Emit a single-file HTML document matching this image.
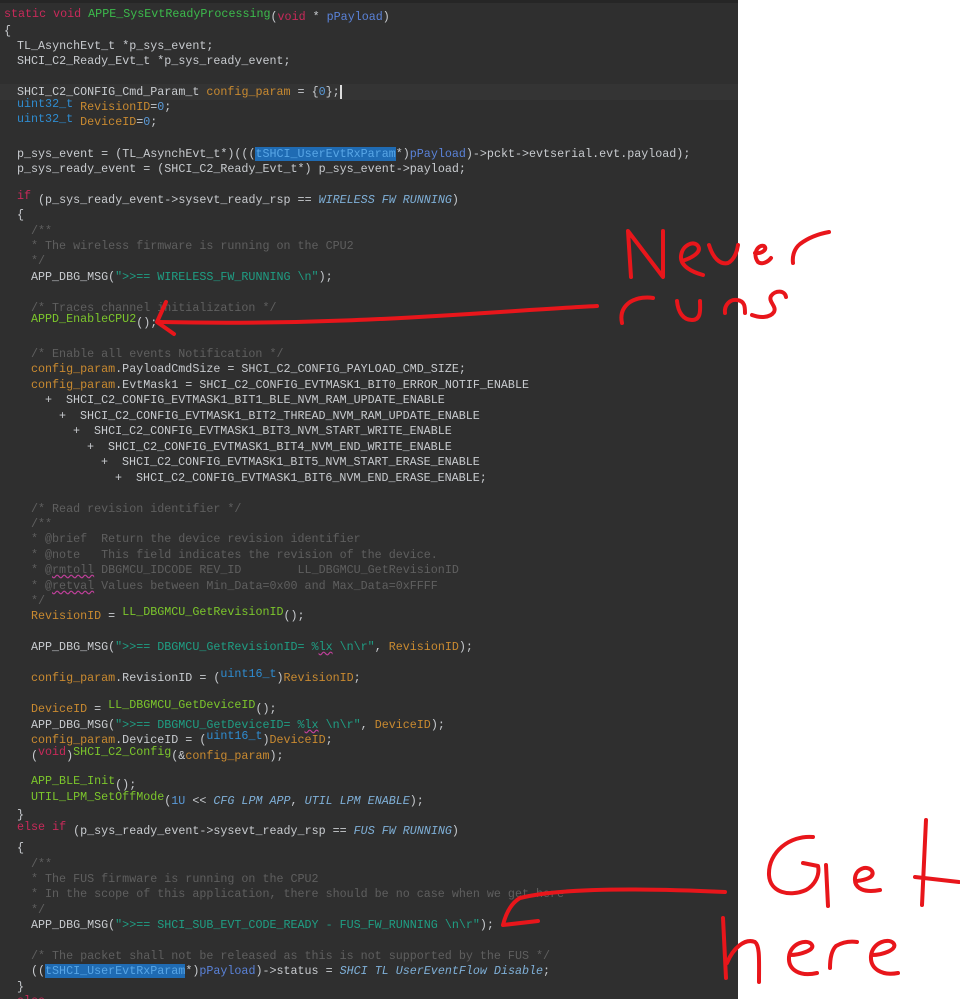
<!DOCTYPE html>
<html><head><meta charset="utf-8">
<style>
html,body{margin:0;padding:0;width:960px;height:999px;overflow:hidden;background:#fff;}
#code{position:absolute;left:0;top:0;width:738px;height:999px;background:#2f2f2f;overflow:hidden;}
.l{position:absolute;white-space:pre;font-family:"Liberation Mono",monospace;font-size:11.7px;line-height:15px;height:15px;color:#c8cbcf;}
.k{color:#c82a5a}
.f{color:#7cc62c}
.fn{color:#3cbb4c}
.p{color:#5a82d8}
.o{color:#c98a30}
.t{color:#2f8cd0}
.c{color:#5f5f5f}
.s{color:#1f9e84}
.i{color:#7fb0d8;font-style:italic}
.n{color:#5a9ad8}
.h{background:#1f6bb3;color:#58a6e6}
.up{position:relative;top:-4px}
.dn{position:relative;top:3px}
.sq{text-decoration:underline wavy #c0409a}
</style></head><body>
<div id="code">
<div style="position:absolute;left:0;top:0;width:738px;height:3px;background:#262626"></div>
<div style="position:absolute;left:0;top:84px;width:738px;height:16px;background:#343434"></div>
<div class="l" style="left:4px;top:7px"><span class="k">static void</span> <span class="fn">APPE_SysEvtReadyProcessing</span><span class="dn">(<span class="k">void</span> * <span class="p">pPayload</span>)</span></div>
<div class="l" style="left:4px;top:24px">{</div>
<div class="l" style="left:17px;top:39px">TL_AsynchEvt_t *p_sys_event;</div>
<div class="l" style="left:17px;top:54px">SHCI_C2_Ready_Evt_t *p_sys_ready_event;</div>
<div class="l" style="left:17px;top:85px">SHCI_C2_CONFIG_Cmd_Param_t <span class="o">config_param</span> = {<span class="n">0</span>};<span style="border-left:2px solid #ddd"></span></div>
<div class="l" style="left:17px;top:97px"><span class="t">uint32_t</span> <span class="o dn">RevisionID</span><span class="dn">=<span class="n">0</span>;</span></div>
<div class="l" style="left:17px;top:112px"><span class="t">uint32_t</span> <span class="o dn">DeviceID</span><span class="dn">=<span class="n">0</span>;</span></div>
<div class="l" style="left:17px;top:147px">p_sys_event = (TL_AsynchEvt_t*)(((<span class="h">tSHCI_UserEvtRxParam</span>*)<span class="p">pPayload</span>)-&gt;pckt-&gt;evtserial.evt.payload);</div>
<div class="l" style="left:17px;top:162px">p_sys_ready_event = (SHCI_C2_Ready_Evt_t*) p_sys_event-&gt;payload;</div>
<div class="l" style="left:17px;top:193px"><span class="k up">if</span> (p_sys_ready_event-&gt;sysevt_ready_rsp == <span class="i">WIRELESS FW RUNNING</span>)</div>
<div class="l" style="left:17px;top:208px">{</div>
<div class="l c" style="left:31px;top:224px">/**</div>
<div class="l c" style="left:31px;top:239px">* The wireless firmware is running on the CPU2</div>
<div class="l c" style="left:31px;top:254px">*/</div>
<div class="l" style="left:31px;top:270px">APP_DBG_MSG(<span class="s">"&gt;&gt;== WIRELESS_FW_RUNNING \n"</span>);</div>
<div class="l c" style="left:31px;top:301px">/* Traces channel initialization */</div>
<div class="l" style="left:31px;top:316px"><span class="f up">APPD_EnableCPU2</span>();</div>
<div class="l c" style="left:31px;top:347px">/* Enable all events Notification */</div>
<div class="l" style="left:31px;top:362px"><span class="o">config_param</span>.PayloadCmdSize = SHCI_C2_CONFIG_PAYLOAD_CMD_SIZE;</div>
<div class="l" style="left:31px;top:378px"><span class="o">config_param</span>.EvtMask1 = SHCI_C2_CONFIG_EVTMASK1_BIT0_ERROR_NOTIF_ENABLE</div>
<div class="l" style="left:45px;top:393px">+  SHCI_C2_CONFIG_EVTMASK1_BIT1_BLE_NVM_RAM_UPDATE_ENABLE</div>
<div class="l" style="left:59px;top:409px">+  SHCI_C2_CONFIG_EVTMASK1_BIT2_THREAD_NVM_RAM_UPDATE_ENABLE</div>
<div class="l" style="left:73px;top:424px">+  SHCI_C2_CONFIG_EVTMASK1_BIT3_NVM_START_WRITE_ENABLE</div>
<div class="l" style="left:87px;top:440px">+  SHCI_C2_CONFIG_EVTMASK1_BIT4_NVM_END_WRITE_ENABLE</div>
<div class="l" style="left:101px;top:455px">+  SHCI_C2_CONFIG_EVTMASK1_BIT5_NVM_START_ERASE_ENABLE</div>
<div class="l" style="left:115px;top:471px">+  SHCI_C2_CONFIG_EVTMASK1_BIT6_NVM_END_ERASE_ENABLE;</div>
<div class="l c" style="left:31px;top:502px">/* Read revision identifier */</div>
<div class="l c" style="left:31px;top:517px">/**</div>
<div class="l c" style="left:31px;top:532px">* @brief  Return the device revision identifier</div>
<div class="l c" style="left:31px;top:548px">* @note   This field indicates the revision of the device.</div>
<div class="l c" style="left:31px;top:563px">* @<span class="sq">rmtoll</span> DBGMCU_IDCODE REV_ID        LL_DBGMCU_GetRevisionID</div>
<div class="l c" style="left:31px;top:579px">* @<span class="sq">retval</span> Values between Min_Data=0x00 and Max_Data=0xFFFF</div>
<div class="l c" style="left:31px;top:594px">*/</div>
<div class="l" style="left:31px;top:609px"><span class="o">RevisionID</span> = <span class="f up">LL_DBGMCU_GetRevisionID</span>();</div>
<div class="l" style="left:31px;top:640px">APP_DBG_MSG(<span class="s">"&gt;&gt;== DBGMCU_GetRevisionID= %<span class="sq">lx</span> \n\r"</span>, <span class="o">RevisionID</span>);</div>
<div class="l" style="left:31px;top:671px"><span class="o">config_param</span>.RevisionID = (<span class="t up">uint16_t</span>)<span class="o">RevisionID</span>;</div>
<div class="l" style="left:31px;top:702px"><span class="o">DeviceID</span> = <span class="f up">LL_DBGMCU_GetDeviceID</span>();</div>
<div class="l" style="left:31px;top:718px">APP_DBG_MSG(<span class="s">"&gt;&gt;== DBGMCU_GetDeviceID= %<span class="sq">lx</span> \n\r"</span>, <span class="o">DeviceID</span>);</div>
<div class="l" style="left:31px;top:733px"><span class="o">config_param</span>.DeviceID = (<span class="t up">uint16_t</span>)<span class="o">DeviceID</span>;</div>
<div class="l" style="left:31px;top:749px">(<span class="k up">void</span>)<span class="f up">SHCI_C2_Config</span>(&amp;<span class="o">config_param</span>);</div>
<div class="l" style="left:31px;top:778px"><span class="f up">APP_BLE_Init</span>();</div>
<div class="l" style="left:31px;top:794px"><span class="f up">UTIL_LPM_SetOffMode</span>(<span class="n">1U</span> &lt;&lt; <span class="i">CFG LPM APP</span>, <span class="i">UTIL LPM ENABLE</span>);</div>
<div class="l" style="left:17px;top:808px">}</div>
<div class="l" style="left:17px;top:824px"><span class="k up">else if</span> (p_sys_ready_event-&gt;sysevt_ready_rsp == <span class="i">FUS FW RUNNING</span>)</div>
<div class="l" style="left:17px;top:841px">{</div>
<div class="l c" style="left:31px;top:857px">/**</div>
<div class="l c" style="left:31px;top:872px">* The FUS firmware is running on the CPU2</div>
<div class="l c" style="left:31px;top:887px">* In the scope of this application, there should be no case when we get here</div>
<div class="l c" style="left:31px;top:903px">*/</div>
<div class="l" style="left:31px;top:918px">APP_DBG_MSG(<span class="s">"&gt;&gt;== SHCI_SUB_EVT_CODE_READY - FUS_FW_RUNNING \n\r"</span>);</div>
<div class="l c" style="left:31px;top:949px">/* The packet shall not be released as this is not supported by the FUS */</div>
<div class="l" style="left:31px;top:964px">((<span class="h">tSHCI_UserEvtRxParam</span>*)<span class="p">pPayload</span>)-&gt;status = <span class="i">SHCI TL UserEventFlow Disable</span>;</div>
<div class="l" style="left:17px;top:980px">}</div>
<div class="l" style="left:17px;top:994px"><span class="k">else</span></div>
</div>
<svg width="960" height="999" style="position:absolute;left:0;top:0" fill="none" stroke="#e8161b" stroke-width="4" stroke-linecap="round" stroke-linejoin="round">
<path d="M631,277 L628,231 L663,277 L663,231"/>
<path d="M682,261 C692,258 702,252 698,246 C694,240 682,245 681,256 C680,266 692,272 703,275"/>
<path d="M709,245 C713,258 720,265 728,263 C734,260 737,252 738,245"/>
<path d="M755,253 C762,254 768,249 764,246 C758,244 752,254 758,262 C762,265 768,262 771,258"/>
<path d="M793,263 C792,255 795,248 800,244 C808,238 818,234 829,232"/>
<path d="M622,323 C620,314 623,307 630,302 C638,297 648,297 653,298"/>
<path d="M677,301 C678,312 683,320 692,320 C702,320 700,308 700,301"/>
<path d="M725,313 C724,305 730,299 737,300 C745,301 745,307 745,313"/>
<path d="M786,297 C785,290 775,290 771,296 C768,302 777,306 774,312 C770,318 760,318 752,315"/>
<path d="M597,306 C480,312 350,326 160,322"/>
<path d="M166,302 L157,322 L174,334"/>
<path d="M725,892 C640,888 560,888 520,898 Q508,905 503,925 L538,921"/>
<path d="M813,837 C790,835 768,852 769,875 C770,893 790,897 806,890 C815,885 820,875 818,866 L803,863"/>
<path d="M826,865 L828,906"/>
<path d="M857,881 C866,880 875,877 872,871 C868,865 856,868 855,878 C854,889 865,893 880,890"/>
<path d="M926,820 L922,905"/>
<path d="M915,877 L959,882"/>
<path d="M723,918 L726,978"/>
<path d="M727,963 C733,948 745,938 755,942 C760,946 759,960 759,982"/>
<path d="M790,955 C800,955 815,950 812,945 C808,938 790,943 789,957 C788,970 800,977 817,973"/>
<path d="M830,968 C830,958 832,950 836,946 C843,942 850,941 857,942"/>
<path d="M872,955 C882,955 897,950 894,944 C890,937 872,942 871,956 C870,969 882,976 898,973"/>
</svg>
</body></html>
